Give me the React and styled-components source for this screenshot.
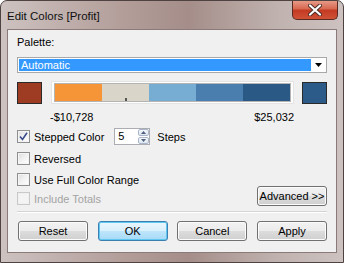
import React from "react";
import styled, { createGlobalStyle } from "styled-components";

const Global = createGlobalStyle`
  html, body { margin: 0; padding: 0; background: #ffffff; }
  body { font-family: "Liberation Sans", Arial, sans-serif; }
  * { box-sizing: border-box; }
`;

const Window = styled.div`
  width: 344px;
  height: 263px;
  border: 1px solid #4e4341;
  border-radius: 7px 7px 0 0;
  background: linear-gradient(to right, #cdc2c0 0%, #b39e9a 35%, #a58e8a 55%, #bfb1ae 80%, #cdc2c0 100%);
  padding: 0 6px 9px 6px;
  display: flex;
  flex-direction: column;
  overflow: hidden;
`;

const TitleBar = styled.div`
  height: 28px;
  display: flex;
  align-items: flex-start;
  justify-content: space-between;
  flex: none;
`;

const Title = styled.div`
  font-size: 11.5px;
  color: #101010;
  padding-top: 8px;
  line-height: 14px;
`;

const Close = styled.div`
  width: 46px;
  height: 20px;
  margin-top: -1px;
  margin-right: -1px;
  border: 1px solid #5a2a22;
  border-top: none;
  border-radius: 0 0 5px 5px;
  background: linear-gradient(#e8a08e 0%, #d86a52 45%, #c43a22 55%, #cf5236 100%);
  display: flex;
  align-items: center;
  justify-content: center;
`;

const Client = styled.div`
  flex: 1;
  background: #f0f0f0;
  border: 1px solid #8a7b79;
  padding: 6px 9px 9px 9px;
  display: flex;
  flex-direction: column;
  font-size: 11px;
  color: #000;
`;

const Label = styled.div`
  line-height: 13px;
  height: 13px;
`;

const Select = styled.div`
  margin-top: 8px;
  height: 16px;
  border: 1px solid #a8a8a8;
  background: #fff;
  display: flex;
  padding: 1px;
`;

const SelectValue = styled.div`
  flex: 1;
  background: #3399ff;
  color: #fff;
  line-height: 12px;
  padding-left: 2px;
`;

const SelectArrow = styled.div`
  width: 14px;
  display: flex;
  align-items: center;
  justify-content: center;
`;

const RampRow = styled.div`
  margin-top: 8px;
  height: 23px;
  display: flex;
  align-items: center;
  justify-content: space-between;
`;

const Swatch = styled.div`
  width: 25px;
  height: 22px;
  border: 1px solid #2a2a2a;
  background: ${(p) => p.$color};
`;

const RampBox = styled.div`
  width: 243px;
  height: 23px;
  background: #fff;
  border: 1px solid #e4e4e4;
  padding: 1px 2px;
  display: flex;
`;

const RampInner = styled.div`
  flex: 1;
  display: flex;
  border: 1px solid #b4b4b4;
`;

const Segment = styled.div`
  flex: 1;
  background: ${(p) => p.$color};
  position: relative;
`;

const Tick = styled.div`
  position: absolute;
  left: 50%;
  bottom: 0;
  width: 2px;
  height: 3px;
  background: #555;
`;

const Values = styled.div`
  margin-top: 7px;
  height: 13px;
  line-height: 13px;
  display: flex;
  justify-content: space-between;
  padding: 0 33px 0 33px;
`;

const CheckRow = styled.div`
  margin-top: ${(p) => p.$mt}px;
  height: 17px;
  display: flex;
  align-items: center;
  color: ${(p) => (p.$disabled ? "#a3a3a3" : "#000")};
`;

const Box = styled.span`
  width: 13px;
  height: 13px;
  flex: none;
  border: 1px solid ${(p) => (p.$disabled ? "#c9c9c9" : "#8e8f8f")};
  background: ${(p) =>
    p.$disabled ? "#f4f4f4" : "linear-gradient(135deg, #dcdcdc 0%, #f2f2f2 50%, #ffffff 100%)"};
  box-shadow: inset 0 0 0 1px ${(p) => (p.$disabled ? "#f0f0f0" : "#f4f4f4")};
  margin-right: 4px;
  display: flex;
  align-items: center;
  justify-content: center;
`;

const Spin = styled.div`
  margin-left: 10px;
  width: 36px;
  height: 17px;
  border: 1px solid #abadb3;
  background: #fff;
  display: flex;
`;

const SpinText = styled.div`
  flex: 1;
  padding-left: 3px;
  line-height: 15px;
`;

const SpinButtons = styled.div`
  width: 11px;
  display: flex;
  flex-direction: column;
  gap: 1px;
`;

const SpinBtn = styled.div`
  flex: 1;
  border: 1px solid #a9b6c9;
  border-radius: 2px;
  background: linear-gradient(#f4f7fb, #dfe6ef);
  display: flex;
  align-items: center;
  justify-content: center;
`;

const Steps = styled.span`
  margin-left: 7px;
`;

const LastRow = styled.div`
  margin-top: -2px;
  display: flex;
  justify-content: space-between;
  align-items: flex-start;
`;

const Button = styled.div`
  width: ${(p) => p.$w || 70}px;
  height: 20px;
  border: 1px solid ${(p) => (p.$default ? "#3c7fb1" : "#707070")};
  border-radius: 3px;
  background: ${(p) =>
    p.$default
      ? "linear-gradient(#eaf6fd 0%, #d9f0fc 50%, #bee6fd 50%, #a7d9f5 100%)"
      : "linear-gradient(#f2f2f2 0%, #ebebeb 50%, #dddddd 50%, #cfcfcf 100%)"};
  box-shadow: inset 0 0 0 1px ${(p) => (p.$default ? "#5fc8f2" : "#fcfcfc")};
  display: flex;
  align-items: center;
  justify-content: center;
  line-height: 13px;
  color: #000;
`;

const Separator = styled.div`
  margin-top: 4px;
  height: 2px;
  border-top: 1px solid #d5d5d5;
  border-bottom: 1px solid #ffffff;
`;

const ButtonRow = styled.div`
  margin-top: 8px;
  display: flex;
  justify-content: space-between;
  padding-left: 1px;
`;

const Check = () => (
  <svg width="9" height="9" viewBox="0 0 9 9">
    <path d="M1 4.5 L3.5 7.5 L8 0.8" fill="none" stroke="#3b4f8c" strokeWidth="1.6" />
  </svg>
);

const Tri = ({ up, color = "#4c607f", w = 5, h = 3 }) => (
  <svg width={w} height={h} viewBox={`0 0 ${w} ${h}`}>
    <path d={up ? `M0 ${h} L${w / 2} 0 L${w} ${h}Z` : `M0 0 L${w} 0 L${w / 2} ${h}Z`} fill={color} />
  </svg>
);

const CheckItem = ({ label, checked, disabled, mt }) => (
  <CheckRow $mt={mt} $disabled={disabled}>
    <Box $disabled={disabled}>{checked && <Check />}</Box>
    {label}
  </CheckRow>
);

export default function App() {
  const colors = ["#f69537", "#d9d5c9", "#77acd3", "#4a7eae", "#2b5986"];
  return (
    <>
      <Global />
      <Window>
        <TitleBar>
          <Title>Edit Colors [Profit]</Title>
          <Close>
            <svg width="14" height="12" viewBox="0 0 14 12">
              <path d="M2 1.5 L12 10.5 M12 1.5 L2 10.5" stroke="#4a2a24" strokeWidth="4" strokeLinecap="round" />
              <path d="M2 1.5 L12 10.5 M12 1.5 L2 10.5" stroke="#ffffff" strokeWidth="2.2" strokeLinecap="round" />
            </svg>
          </Close>
        </TitleBar>
        <Client>
          <Label>Palette:</Label>
          <Select>
            <SelectValue>Automatic</SelectValue>
            <SelectArrow>
              <Tri color="#000" w={7} h={4} />
            </SelectArrow>
          </Select>
          <RampRow>
            <Swatch $color="#9d3b23" />
            <RampBox>
              <RampInner>
                {colors.map((c, i) => (
                  <Segment key={c} $color={c}>
                    {i === 1 && <Tick />}
                  </Segment>
                ))}
              </RampInner>
            </RampBox>
            <Swatch $color="#2c5b8a" />
          </RampRow>
          <Values>
            <span>-$10,728</span>
            <span>$25,032</span>
          </Values>
          <CheckRow $mt={4}>
            <Box>
              <Check />
            </Box>
            Stepped Color
            <Spin>
              <SpinText>5</SpinText>
              <SpinButtons>
                <SpinBtn>
                  <Tri up />
                </SpinBtn>
                <SpinBtn>
                  <Tri />
                </SpinBtn>
              </SpinButtons>
            </Spin>
            <Steps>Steps</Steps>
          </CheckRow>
          <CheckItem label="Reversed" mt={5} />
          <CheckItem label="Use Full Color Range" mt={4} />
          <LastRow>
            <CheckItem label="Include Totals" disabled mt={4} />
            <Button>Advanced &gt;&gt;</Button>
          </LastRow>
          <Separator />
          <ButtonRow>
            <Button>Reset</Button>
            <Button $default>OK</Button>
            <Button>Cancel</Button>
            <Button>Apply</Button>
          </ButtonRow>
        </Client>
      </Window>
    </>
  );
}
